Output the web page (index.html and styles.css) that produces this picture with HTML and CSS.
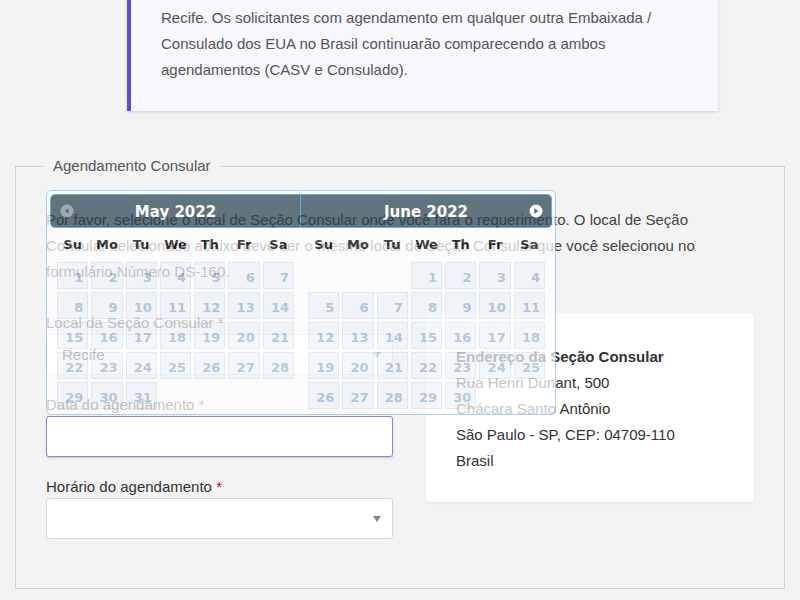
FILE: index.html
```html
<!DOCTYPE html>
<html lang="pt-BR">
<head>
<meta charset="utf-8">
<title>Agendamento Consular</title>
<link rel="stylesheet" href="styles.css">
</head>
<body>
<div class="page">
  <div class="notice">
    <p>A nova medida vale somente no CASV dos Consulados em Porto Alegre e em<br>Recife. Os solicitantes com agendamento em qualquer outra Embaixada / Consulado dos EUA no Brasil continuarão comparecendo a ambos agendamentos (CASV e Consulado).</p>
  </div>

  <fieldset class="box">
    <legend class="box-title">Agendamento Consular</legend>
    <p class="intro">Por favor, selecione o local de Seção Consular onde você fará o requerimento. O local de Seção Consular selecionado abaixo deve ser o mesmo local de Seção Consular que você selecionou no formulário Número DS-160.</p>

    <div class="row">
      <div class="form-col">
        <div class="group">
          <label class="label">Local da Seção Consular <span class="req">*</span></label>
          <div class="select"><span>Recife</span><span class="caret"></span></div>
        </div>
        <div class="group">
          <label class="label">Data do agendamento <span class="req">*</span></label>
          <div class="input focused"></div>
        </div>
        <div class="group">
          <label class="label">Horário do agendamento <span class="req">*</span></label>
          <div class="select"><span></span><span class="caret"></span></div>
        </div>

        <div class="dp">
          <div class="dp-group">
            <div class="dp-header first">
              <span class="dp-nav prev"><svg width="14" height="14" viewBox="0 0 14 14"><circle cx="7" cy="7" r="6.5" fill="#ffffff" fill-opacity="0.4"/><path d="M8.6 4.2 L4.6 7 L8.6 9.8 Z" fill="#1f3846"/></svg></span>
              <span class="dp-title">May 2022</span>
            </div>
            <div class="dp-grid">
              <span class="dn">Su</span><span class="dn">Mo</span><span class="dn">Tu</span><span class="dn">We</span><span class="dn">Th</span><span class="dn">Fr</span><span class="dn">Sa</span>
              <span class="d">1</span><span class="d">2</span><span class="d">3</span><span class="d">4</span><span class="d">5</span><span class="d">6</span><span class="d">7</span>
              <span class="d">8</span><span class="d">9</span><span class="d">10</span><span class="d">11</span><span class="d">12</span><span class="d">13</span><span class="d">14</span>
              <span class="d">15</span><span class="d">16</span><span class="d">17</span><span class="d">18</span><span class="d">19</span><span class="d">20</span><span class="d">21</span>
              <span class="d">22</span><span class="d">23</span><span class="d">24</span><span class="d">25</span><span class="d">26</span><span class="d">27</span><span class="d">28</span>
              <span class="d">29</span><span class="d">30</span><span class="d">31</span>
            </div>
          </div>
          <div class="dp-group">
            <div class="dp-header last">
              <span class="dp-title">June 2022</span>
              <span class="dp-nav next"><svg width="14" height="14" viewBox="0 0 14 14"><circle cx="7" cy="7" r="6.5" fill="#ffffff"/><path d="M5.4 4.2 L9.4 7 L5.4 9.8 Z" fill="#1f3846"/></svg></span>
            </div>
            <div class="dp-grid">
              <span class="dn">Su</span><span class="dn">Mo</span><span class="dn">Tu</span><span class="dn">We</span><span class="dn">Th</span><span class="dn">Fr</span><span class="dn">Sa</span>
              <span class="blank"></span><span class="blank"></span><span class="blank"></span>
              <span class="d">1</span><span class="d">2</span><span class="d">3</span><span class="d">4</span>
              <span class="d">5</span><span class="d">6</span><span class="d">7</span><span class="d">8</span><span class="d">9</span><span class="d">10</span><span class="d">11</span>
              <span class="d">12</span><span class="d">13</span><span class="d">14</span><span class="d">15</span><span class="d">16</span><span class="d">17</span><span class="d">18</span>
              <span class="d">19</span><span class="d">20</span><span class="d">21</span><span class="d">22</span><span class="d">23</span><span class="d">24</span><span class="d">25</span>
              <span class="d">26</span><span class="d">27</span><span class="d">28</span><span class="d">29</span><span class="d">30</span>
            </div>
          </div>
        </div>
      </div>

      <div class="card">
        <p class="card-title">Endereço da Seção Consular</p>
        <p>Rua Henri Dunant, 500</p>
        <p>Chácara Santo Antônio</p>
        <p>São Paulo - SP, CEP: 04709-110</p>
        <p>Brasil</p>
      </div>
    </div>
  </fieldset>
</div>
</body>
</html>
```

FILE: styles.css
```css
html, body {
  margin: 0;
  padding: 0;
}
body {
  background: #f3f3f3;
  font-family: "Liberation Sans", Arial, sans-serif;
  font-size: 15px;
  color: #333;
}
.page {
  padding-bottom: 40px;
}
.notice {
  margin: -51px 0 0 127px;
  width: 527px;
  padding: 30px 30px 28px 30px;
  background: #f8f7fd;
  border-left: 4px solid #5b4cd3;
  box-shadow: 0 1px 3px rgba(60, 50, 120, 0.18);
}
.notice p {
  margin: 0;
  line-height: 26px;
  color: #555;
}
.box {
  margin: 42px 15px 0 15px;
  padding: 28px 30px 49px 30px;
  border: 1px solid #d3d3d3;
  min-width: 0;
}
.box-title {
  margin-left: -3px;
  padding: 0 10px;
  line-height: 26px;
  color: #555;
}
.intro {
  margin: 0 0 27px 0;
  max-width: 680px;
  line-height: 26px;
  color: #444;
}
.row {
  display: grid;
  grid-template-columns: 347px 328px;
  justify-content: space-between;
  align-items: start;
}
.form-col {
  position: relative;
}
.group {
  margin-bottom: 19px;
}
.group:nth-child(3) {
  margin-bottom: 0;
}
.label {
  display: block;
  line-height: 22px;
  color: #333;
}
.req {
  color: #d0021b;
}
.select, .input {
  box-sizing: border-box;
  height: 41px;
  background: #fff;
  border: 1px solid #d6d6d6;
  border-radius: 3px;
}
.select {
  display: flex;
  align-items: center;
  justify-content: space-between;
  padding: 0 11px 0 15px;
  color: #333;
}
.caret {
  width: 0;
  height: 0;
  border-left: 4px solid transparent;
  border-right: 4px solid transparent;
  border-top: 6px solid #888;
}
.input.focused {
  border-color: #8e83d6;
  box-shadow: 0 1px 2px rgba(100, 80, 200, 0.3);
}
.card {
  margin-top: 2px;
  background: #fff;
  border-radius: 4px;
  padding: 30px 30px 28px 30px;
  box-shadow: 0 1px 2px rgba(0, 0, 0, 0.08);
}
.card p {
  margin: 0;
  line-height: 26px;
  color: #333;
}
.card .card-title {
  font-weight: bold;
}

/* datepicker overlay */
.dp {
  position: absolute;
  left: 0;
  top: -122px;
  width: 502px;
  padding: 3px 3px 5px 3px;
  background: #fff;
  border: 1px solid #8ec0e8;
  border-radius: 5px;
  display: flex;
  opacity: 0.72;
  font-family: "DejaVu Sans", Verdana, sans-serif;
  z-index: 10;
}
.dp-group {
  width: 251px;
}
.dp-header {
  position: relative;
  box-sizing: border-box;
  height: 34px;
  padding-top: 2px;
  background: #2a4350;
  border: 1px solid #3d8fd6;
  display: flex;
  align-items: center;
  justify-content: center;
}
.dp-header.first {
  border-radius: 5px 0 0 5px;
}
.dp-header.last {
  border-left: 0;
  border-radius: 0 5px 5px 0;
}
.dp-title {
  color: #fff;
  font-weight: bold;
  font-size: 15px;
}
.dp-nav {
  position: absolute;
  top: 9px;
  width: 14px;
  height: 14px;
  display: flex;
}
.dp-nav.prev {
  left: 9px;
}
.dp-nav.next {
  right: 8px;
}
.dp-grid {
  margin: 6px 7px 0 7px;
  display: grid;
  grid-template-columns: repeat(7, 1fr);
  grid-auto-rows: 27px;
  grid-template-rows: 25px;
  column-gap: 3px;
  row-gap: 3px;
}
.dn {
  text-align: center;
  font-weight: bold;
  font-size: 13px;
  line-height: 22px;
  color: #000;
}
.d {
  box-sizing: border-box;
  background: #eff4fa;
  border: 1px solid #dbe3ed;
  color: #99b5d2;
  font-weight: bold;
  font-size: 13px;
  text-align: right;
  padding: 5px 4px 0 0;
  line-height: 20px;
}
```
